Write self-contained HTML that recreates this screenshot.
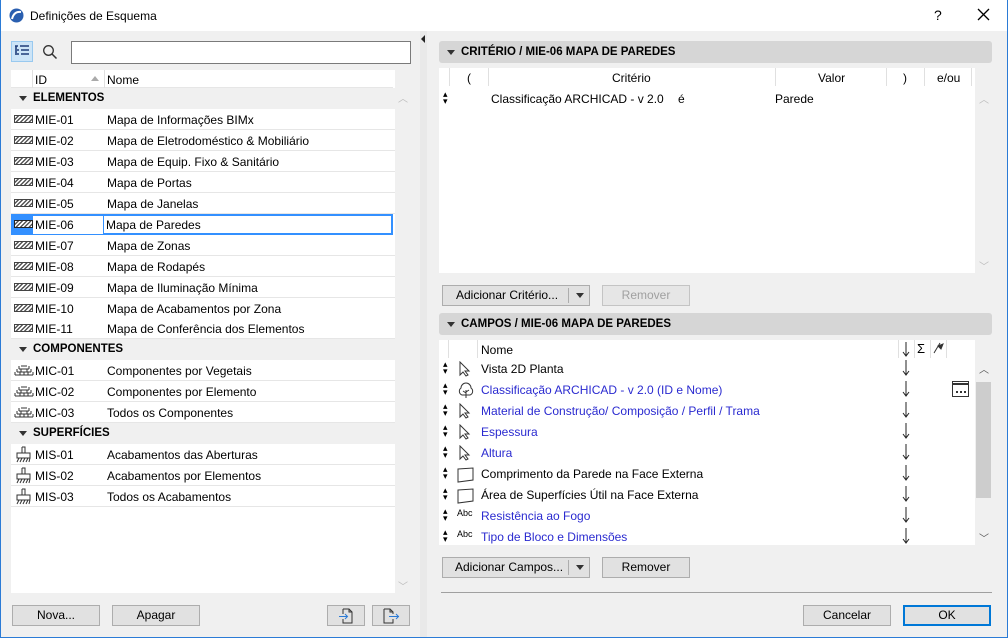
<!DOCTYPE html>
<html><head><meta charset="utf-8"><style>
*{box-sizing:border-box;margin:0;padding:0}
body{width:1008px;height:638px;overflow:hidden;background:#f0f0f0;font-family:"Liberation Sans",Arial,sans-serif;font-size:12px;color:#000;position:relative}
.a{position:absolute}
.win{position:absolute;left:0;top:0;width:1008px;height:638px;border:1px solid #2b7bd6;border-top:none}
.title{position:absolute;left:0;top:0;width:1008px;height:31px;background:#fff}
.btn{position:absolute;height:21px;background:#e1e1e1;border:1px solid #adadad;text-align:center;line-height:19px;font-size:12px}
.row{position:absolute;left:11px;width:384px;height:21px;background:#fff;border-bottom:1px solid #e6e6e6}
.row .id{position:absolute;left:24px;top:4px}
.row .nm{position:absolute;left:96px;top:4px}
.grp{position:absolute;left:11px;width:384px;height:21px;background:#f0f0f0;font-weight:bold;font-size:11.5px}
.grp span{position:absolute;left:22px;top:4px}
.tri{position:absolute;left:8px;top:8px;width:0;height:0;border-left:4px solid transparent;border-right:4px solid transparent;border-top:5px solid #333}
.hdr{position:absolute;left:439px;width:553px;height:22px;background:#d6d6d6;border-radius:3px;font-weight:bold;font-size:11.5px}
.hdr span{position:absolute;left:22px;top:5px}
.hdr .tri{left:8px;top:9px}
.f{position:absolute;left:439px;width:536px;height:21px}
.f .dr{position:absolute;left:4px;top:3px;font-size:9px;line-height:7px}
.f .ic{position:absolute;left:18px;top:3px}
.f .t{position:absolute;left:42px;top:4px}
.f .ar{position:absolute;left:463px;top:2px}
.bl{color:#2a2ad0}
.hatch{position:absolute;left:3px;top:6px;width:19px;height:8px;border:1px solid #444;background:repeating-linear-gradient(135deg,#fff 0 1.5px,#555 1.5px 3px)}
</style></head><body>
<div class="title">
<svg class="a" style="left:9px;top:8px" width="15" height="15" viewBox="0 0 15 15"><circle cx="7.5" cy="7.5" r="7" fill="#2a5fb0"/><path d="M3 11 Q5 3 12 4" stroke="#fff" stroke-width="2" fill="none"/></svg>
<div class="a" style="left:30px;top:9px;font-size:12px">Definições de Esquema</div>
<div class="a" style="left:934px;top:7px;font-size:14px">?</div>
<svg class="a" style="left:977px;top:8px" width="13" height="13"><path d="M1 1l11 11M12 1L1 12" stroke="#000" stroke-width="1.3"/></svg>
</div>
<div class="win"></div>
<div class="a" style="left:11px;top:41px;width:22px;height:21px;background:#cce4f7;border:1px solid #99c9ef"></div>
<svg class="a" style="left:14px;top:45px" width="16" height="13" viewBox="0 0 16 13"><path d="M1 1h3M6 1h9M3 5h2M7 5h8M3 9h2M7 9h8M2 1v9" stroke="#1e3c78" stroke-width="1.6" fill="none"/></svg>
<svg class="a" style="left:42px;top:44px" width="16" height="16" viewBox="0 0 16 16"><circle cx="6.5" cy="6.5" r="4.8" stroke="#333" stroke-width="1.3" fill="none"/><path d="M10 10l4.5 4.5" stroke="#333" stroke-width="1.5"/></svg>
<div class="a" style="left:71px;top:41px;width:340px;height:23px;background:#fff;border:1px solid #7a7a7a"></div>
<div class="a" style="left:11px;top:70px;width:384px;height:523px;background:#fff"></div>
<div class="a" style="left:395px;top:88px;width:15px;height:505px;background:#f0f0f0"></div>
<div class="a" style="left:11px;top:70px;width:382px;height:18px;background:#fff;border-bottom:1px solid #e6e6e6"></div>
<div class="a" style="left:32px;top:70px;width:1px;height:18px;background:#e0e0e0"></div>
<div class="a" style="left:104px;top:70px;width:1px;height:18px;background:#e0e0e0"></div>
<div class="a" style="left:35px;top:73px">ID</div>
<div class="a" style="left:91px;top:76px;width:0;height:0;border-left:4px solid transparent;border-right:4px solid transparent;border-bottom:5px solid #aaa"></div>
<div class="a" style="left:107px;top:73px">Nome</div>
<div class="a" style="left:398px;top:90px;color:#bbb;font-size:10px">︿</div>
<div class="a" style="left:398px;top:578px;color:#bbb;font-size:10px">﹀</div>

<div class="grp" style="top:88px"><div class="tri"></div><span>ELEMENTOS</span></div>
<div class="row" style="top:109px"><div class="hatch"></div><span class="id">MIE-01</span><span class="nm">Mapa de Informações BIMx</span></div>
<div class="row" style="top:130px"><div class="hatch"></div><span class="id">MIE-02</span><span class="nm">Mapa de Eletrodoméstico &amp; Mobiliário</span></div>
<div class="row" style="top:151px"><div class="hatch"></div><span class="id">MIE-03</span><span class="nm">Mapa de Equip. Fixo &amp; Sanitário</span></div>
<div class="row" style="top:172px"><div class="hatch"></div><span class="id">MIE-04</span><span class="nm">Mapa de Portas</span></div>
<div class="row" style="top:193px"><div class="hatch"></div><span class="id">MIE-05</span><span class="nm">Mapa de Janelas</span></div>
<div class="row" style="top:214px;border:none"><div class="a" style="left:0;top:0;width:92px;height:21px;background:#3390ff"></div><div class="hatch" style="border-color:#222"></div><span class="id" style="left:22px;background:#fff;top:2px;padding:2px 2px;width:70px">MIE-06</span><div class="a" style="left:92px;top:0;width:290px;height:21px;border:2px solid #3390ff;border-left:1px solid #3390ff"></div><span class="nm" style="left:95px">Mapa de Paredes</span></div>
<div class="row" style="top:235px"><div class="hatch"></div><span class="id">MIE-07</span><span class="nm">Mapa de Zonas</span></div>
<div class="row" style="top:256px"><div class="hatch"></div><span class="id">MIE-08</span><span class="nm">Mapa de Rodapés</span></div>
<div class="row" style="top:277px"><div class="hatch"></div><span class="id">MIE-09</span><span class="nm">Mapa de Iluminação Mínima</span></div>
<div class="row" style="top:298px"><div class="hatch"></div><span class="id">MIE-10</span><span class="nm">Mapa de Acabamentos por Zona</span></div>
<div class="row" style="top:318px"><div class="hatch"></div><span class="id">MIE-11</span><span class="nm">Mapa de Conferência dos Elementos</span></div>
<div class="grp" style="top:339px"><div class="tri"></div><span>COMPONENTES</span></div>
<div class="row" style="top:360px"><svg class="a" style="left:3px;top:5px" width="20" height="11"><path d="M1 10h18M3 7h14M5 4h10M7 1h6M1 10V7M19 10V7M3 7V4M17 7V4M5 4V1M15 4V1M10 10V7M7 7V4M13 7V4M6 10V7M14 10V7" stroke="#333" fill="none"/></svg><span class="id">MIC-01</span><span class="nm">Componentes por Vegetais</span></div>
<div class="row" style="top:381px"><svg class="a" style="left:3px;top:5px" width="20" height="11"><path d="M1 10h18M3 7h14M5 4h10M7 1h6M1 10V7M19 10V7M3 7V4M17 7V4M5 4V1M15 4V1M10 10V7M7 7V4M13 7V4M6 10V7M14 10V7" stroke="#333" fill="none"/></svg><span class="id">MIC-02</span><span class="nm">Componentes por Elemento</span></div>
<div class="row" style="top:402px"><svg class="a" style="left:3px;top:5px" width="20" height="11"><path d="M1 10h18M3 7h14M5 4h10M7 1h6M1 10V7M19 10V7M3 7V4M17 7V4M5 4V1M15 4V1M10 10V7M7 7V4M13 7V4M6 10V7M14 10V7" stroke="#333" fill="none"/></svg><span class="id">MIC-03</span><span class="nm">Todos os Componentes</span></div>
<div class="grp" style="top:423px"><div class="tri"></div><span>SUPERFÍCIES</span></div>
<div class="row" style="top:444px"><svg class="a" style="left:4px;top:2px" width="18" height="18"><path d="M7 1h3v6M7 1v6M2 7h13v5H2zM2 16l2-4M5 16l2-4M8 16l2-4M11 16l2-4M14 16l1-4" stroke="#333" fill="none"/></svg><span class="id">MIS-01</span><span class="nm">Acabamentos das Aberturas</span></div>
<div class="row" style="top:465px"><svg class="a" style="left:4px;top:2px" width="18" height="18"><path d="M7 1h3v6M7 1v6M2 7h13v5H2zM2 16l2-4M5 16l2-4M8 16l2-4M11 16l2-4M14 16l1-4" stroke="#333" fill="none"/></svg><span class="id">MIS-02</span><span class="nm">Acabamentos por Elementos</span></div>
<div class="row" style="top:486px"><svg class="a" style="left:4px;top:2px" width="18" height="18"><path d="M7 1h3v6M7 1v6M2 7h13v5H2zM2 16l2-4M5 16l2-4M8 16l2-4M11 16l2-4M14 16l1-4" stroke="#333" fill="none"/></svg><span class="id">MIS-03</span><span class="nm">Todos os Acabamentos</span></div>

<div class="btn" style="left:12px;top:605px;width:88px">Nova...</div>
<div class="btn" style="left:112px;top:605px;width:88px">Apagar</div>
<div class="btn" style="left:327px;top:605px;width:38px"><svg style="margin-top:2px" width="16" height="16"><path d="M5 1h6l3 3v11H5v-4M5 6V1M11 1v3h3" stroke="#333" fill="none"/><path d="M1 8.5h8M7 6l2.5 2.5L7 11" stroke="#2b7bd6" fill="none"/></svg></div>
<div class="btn" style="left:372px;top:605px;width:38px"><svg style="margin-top:2px" width="18" height="16"><path d="M2 1h6l3 3v2M2 1v14h9v-4M8 1v3h3" stroke="#333" fill="none"/><path d="M7 8.5h10M14 6l2.5 2.5L14 11" stroke="#2b7bd6" fill="none"/></svg></div>

<div class="a" style="left:420px;top:31px;width:7px;height:606px;background:#e9e9e9"></div>
<div class="a" style="left:421px;top:35px;width:0;height:0;border-top:4px solid transparent;border-bottom:4px solid transparent;border-right:4px solid #222"></div>

<div class="hdr" style="top:41px"><div class="tri"></div><span>CRITÉRIO / MIE-06 MAPA DE PAREDES</span></div>
<div class="a" style="left:439px;top:68px;width:536px;height:205px;background:#fff"></div>
<div class="a" style="left:975px;top:86px;width:17px;height:187px;background:#f0f0f0"></div>
<div class="a" style="left:449px;top:68px;width:1px;height:18px;background:#e0e0e0"></div>
<div class="a" style="left:488px;top:68px;width:1px;height:18px;background:#e0e0e0"></div>
<div class="a" style="left:775px;top:68px;width:1px;height:18px;background:#e0e0e0"></div>
<div class="a" style="left:886px;top:68px;width:1px;height:18px;background:#e0e0e0"></div>
<div class="a" style="left:924px;top:68px;width:1px;height:18px;background:#e0e0e0"></div>
<div class="a" style="left:971px;top:68px;width:1px;height:18px;background:#e0e0e0"></div>
<div class="a" style="left:467px;top:71px">(</div>
<div class="a" style="left:612px;top:71px">Critério</div>
<div class="a" style="left:818px;top:71px">Valor</div>
<div class="a" style="left:903px;top:71px">)</div>
<div class="a" style="left:937px;top:71px">e/ou</div>
<div class="a" style="left:443px;top:91px;font-size:9px;line-height:7px">▴<br>▾</div>
<div class="a" style="left:491px;top:92px">Classificação ARCHICAD - v 2.0</div>
<div class="a" style="left:678px;top:92px">é</div>
<div class="a" style="left:775px;top:92px">Parede</div>
<div class="a" style="left:979px;top:91px;color:#bbb;font-size:10px">︿</div>
<div class="a" style="left:979px;top:258px;color:#bbb;font-size:10px">﹀</div>
<div class="btn" style="left:442px;top:285px;width:148px;text-align:left;padding-left:13px">Adicionar Critério...<span class="a" style="left:125px;top:2px;width:1px;height:15px;background:#adadad"></span><span class="a" style="left:133px;top:7px;border-left:4px solid transparent;border-right:4px solid transparent;border-top:5px solid #333"></span></div>
<div class="btn" style="left:602px;top:285px;width:88px;color:#a0a0a0;background:#e6e6e6;border-color:#c4c4c4">Remover</div>

<div class="hdr" style="top:313px"><div class="tri"></div><span>CAMPOS / MIE-06 MAPA DE PAREDES</span></div>
<div class="a" style="left:439px;top:340px;width:536px;height:205px;background:#fff"></div>
<div class="a" style="left:975px;top:358px;width:17px;height:187px;background:#f0f0f0"></div>
<div class="a" style="left:976px;top:382px;width:15px;height:116px;background:#cdcdcd"></div>
<div class="a" style="left:979px;top:361px;font-size:10px;color:#555">︿</div>
<div class="a" style="left:979px;top:530px;font-size:10px;color:#555">﹀</div>
<div class="a" style="left:448px;top:340px;width:1px;height:18px;background:#e0e0e0"></div>
<div class="a" style="left:477px;top:340px;width:1px;height:18px;background:#e0e0e0"></div>
<div class="a" style="left:898px;top:340px;width:1px;height:18px;background:#e0e0e0"></div>
<div class="a" style="left:914px;top:340px;width:1px;height:18px;background:#e0e0e0"></div>
<div class="a" style="left:930px;top:340px;width:1px;height:18px;background:#e0e0e0"></div>
<div class="a" style="left:946px;top:340px;width:1px;height:18px;background:#e0e0e0"></div>
<div class="a" style="left:481px;top:343px">Nome</div>
<svg class="a" style="left:902px;top:342px" width="8" height="15"><path d="M4 0v14M1 10l3 4 3-4" stroke="#222" fill="none"/></svg>
<div class="a" style="left:917px;top:341px;font-size:13px">Σ</div>
<svg class="a" style="left:933px;top:342px" width="12" height="12"><path d="M1 11L7 1M5 4l5-2-2 5z" stroke="#333" fill="#333"/></svg>

<div class="f" style="top:358px"><span class="dr">▴<br>▾</span><svg class="ic" width="14" height="16"><path d="M3 1v13l3-3 3 4 2-1-3-4h4z" stroke="#333" fill="#fff"/></svg><span class="t">Vista 2D Planta</span><svg class="ar" width="8" height="16"><path d="M4 0v15M1 11l3 4 3-4" stroke="#222" fill="none"/></svg></div>
<div class="f" style="top:379px"><span class="dr">▴<br>▾</span><svg class="ic" width="18" height="18"><path d="M9 16V8M9 11l-3-2M9 10l3-2M5 13a4 4 0 0 1-1-7 5 5 0 0 1 10 0 4 4 0 0 1-1 7z" stroke="#333" fill="none"/></svg><span class="t bl">Classificação ARCHICAD - v 2.0 (ID e Nome)</span><svg class="ar" width="8" height="16"><path d="M4 0v15M1 11l3 4 3-4" stroke="#222" fill="none"/></svg><svg class="a" style="left:513px;top:2px" width="17" height="16"><rect x=".5" y=".5" width="16" height="15" stroke="#333" fill="#fff"/><path d="M1 3h15" stroke="#333" stroke-width="2"/><path d="M4 11h2M8 11h2M12 11h2" stroke="#333" stroke-width="2"/></svg></div>
<div class="f" style="top:400px"><span class="dr">▴<br>▾</span><svg class="ic" width="14" height="16"><path d="M3 1v13l3-3 3 4 2-1-3-4h4z" stroke="#333" fill="#fff"/></svg><span class="t bl">Material de Construção/ Composição / Perfil / Trama</span><svg class="ar" width="8" height="16"><path d="M4 0v15M1 11l3 4 3-4" stroke="#222" fill="none"/></svg></div>
<div class="f" style="top:421px"><span class="dr">▴<br>▾</span><svg class="ic" width="14" height="16"><path d="M3 1v13l3-3 3 4 2-1-3-4h4z" stroke="#333" fill="#fff"/></svg><span class="t bl">Espessura</span><svg class="ar" width="8" height="16"><path d="M4 0v15M1 11l3 4 3-4" stroke="#222" fill="none"/></svg></div>
<div class="f" style="top:442px"><span class="dr">▴<br>▾</span><svg class="ic" width="14" height="16"><path d="M3 1v13l3-3 3 4 2-1-3-4h4z" stroke="#333" fill="#fff"/></svg><span class="t bl">Altura</span><svg class="ar" width="8" height="16"><path d="M4 0v15M1 11l3 4 3-4" stroke="#222" fill="none"/></svg></div>
<div class="f" style="top:463px"><span class="dr">▴<br>▾</span><svg class="ic" width="18" height="18"><path d="M1 3l15-1v12l-15 2z" stroke="#333" fill="none"/></svg><span class="t">Comprimento da Parede na Face Externa</span><svg class="ar" width="8" height="16"><path d="M4 0v15M1 11l3 4 3-4" stroke="#222" fill="none"/></svg></div>
<div class="f" style="top:484px"><span class="dr">▴<br>▾</span><svg class="ic" width="18" height="18"><path d="M1 3l15-1v12l-15 2z" stroke="#333" fill="none"/></svg><span class="t">Área de Superfícies Útil na Face Externa</span><svg class="ar" width="8" height="16"><path d="M4 0v15M1 11l3 4 3-4" stroke="#222" fill="none"/></svg></div>
<div class="f" style="top:505px"><span class="dr">▴<br>▾</span><span class="ic" style="font-size:9px;top:3px">Abc</span><span class="t bl">Resistência ao Fogo</span><svg class="ar" width="8" height="16"><path d="M4 0v15M1 11l3 4 3-4" stroke="#222" fill="none"/></svg></div>
<div class="f" style="top:526px"><span class="dr">▴<br>▾</span><span class="ic" style="font-size:9px;top:3px">Abc</span><span class="t bl">Tipo de Bloco e Dimensões</span><svg class="ar" width="8" height="16"><path d="M4 0v15M1 11l3 4 3-4" stroke="#222" fill="none"/></svg></div>

<div class="btn" style="left:442px;top:557px;width:148px;text-align:left;padding-left:12px">Adicionar Campos...<span class="a" style="left:125px;top:2px;width:1px;height:15px;background:#adadad"></span><span class="a" style="left:133px;top:7px;border-left:4px solid transparent;border-right:4px solid transparent;border-top:5px solid #333"></span></div>
<div class="btn" style="left:602px;top:557px;width:88px">Remover</div>
<div class="a" style="left:441px;top:592px;width:551px;height:1px;background:#a0a0a0"></div>
<div class="btn" style="left:803px;top:605px;width:88px">Cancelar</div>
<div class="btn" style="left:903px;top:605px;width:88px;border:2px solid #0078d7;line-height:17px">OK</div>
</body></html>
